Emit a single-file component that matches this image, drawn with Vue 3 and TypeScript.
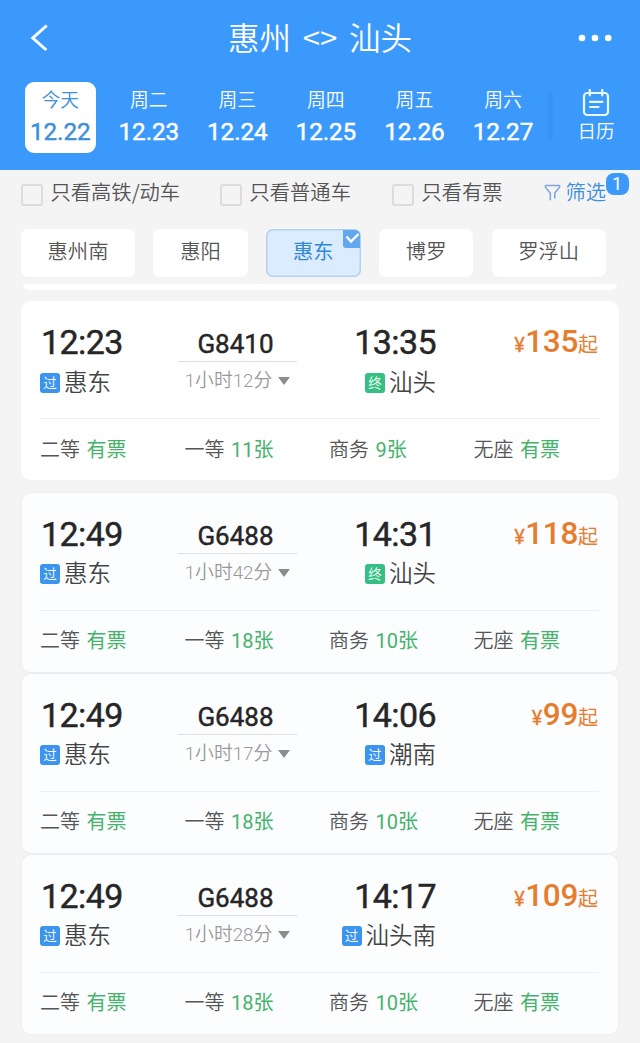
<script setup lang="ts">
interface Day { week: string; date: string }
interface Seat { name: string; left: string }
interface Stop { name: string; end?: boolean }
interface Train {
  depart: string
  arrive: string
  code: string
  duration: string
  from: Stop
  to: Stop
  price: number
  seats: Seat[]
}

const days: Day[] = [
  { week: '今天', date: '12.22' },
  { week: '周二', date: '12.23' },
  { week: '周三', date: '12.24' },
  { week: '周四', date: '12.25' },
  { week: '周五', date: '12.26' },
  { week: '周六', date: '12.27' },
]

const filters: string[] = ['只看高铁/动车', '只看普通车', '只看有票']
const stations: string[] = ['惠州南', '惠阳', '惠东', '博罗', '罗浮山']
const activeStation = '惠东'

const seats = (first: string, business: string): Seat[] => [
  { name: '二等', left: '有票' },
  { name: '一等', left: first },
  { name: '商务', left: business },
  { name: '无座', left: '有票' },
]

const trains: Train[] = [
  { depart: '12:23', arrive: '13:35', code: 'G8410', duration: '1小时12分', from: { name: '惠东' }, to: { name: '汕头', end: true }, price: 135, seats: seats('11张', '9张') },
  { depart: '12:49', arrive: '14:31', code: 'G6488', duration: '1小时42分', from: { name: '惠东' }, to: { name: '汕头', end: true }, price: 118, seats: seats('18张', '10张') },
  { depart: '12:49', arrive: '14:06', code: 'G6488', duration: '1小时17分', from: { name: '惠东' }, to: { name: '潮南' }, price: 99, seats: seats('18张', '10张') },
  { depart: '12:49', arrive: '14:17', code: 'G6488', duration: '1小时28分', from: { name: '惠东' }, to: { name: '汕头南' }, price: 109, seats: seats('18张', '10张') },
]
</script>

<template>
  <div class="page">
    <header class="header">
      <div class="titlebar">
        <svg class="back" width="20" height="28" viewBox="0 0 20 28"><path d="M17.8 1.5 3.8 14 17.3 26" /></svg>
        <h1 class="title"><span>惠州</span><span class="swap">&lt;&gt;</span><span>汕头</span></h1>
        <svg class="more" width="34" height="8" viewBox="0 0 34 8">
          <circle cx="4" cy="4" r="3.3" /><circle cx="17" cy="4" r="3.3" /><circle cx="30.2" cy="4" r="3.3" />
        </svg>
      </div>
      <div class="dates">
        <div v-for="(d, i) in days" :key="d.date" class="day" :class="{ today: i === 0 }">
          <span class="week">{{ d.week }}</span>
          <span class="date">{{ d.date }}</span>
        </div>
        <div class="calendar">
          <svg width="28" height="28" viewBox="0 0 28 28">
            <rect x="2" y="4" width="24" height="22" rx="3.2" />
            <path d="M7.8 1v5.5M20.2 1v5.5M8 12.8h12.5M8 18h8.5" />
          </svg>
          <span>日历</span>
        </div>
      </div>
    </header>

    <div class="filters">
      <label v-for="f in filters" :key="f" class="filter"><i class="box"></i><span>{{ f }}</span></label>
      <div class="sift">
        <svg width="17" height="18" viewBox="0 0 17 18"><path d="M6.3 16.3V9.2L1.5 3.2Q.8 1.5 2.3 1.5h12.4q1.5 0 .8 1.7L10.8 9v5.6" /></svg>
        <span>筛选</span>
        <b class="count">1</b>
      </div>
    </div>

    <div class="chips">
      <div v-for="s in stations" :key="s" class="chip" :class="{ active: s === activeStation, wide: s.length > 2 }">
        {{ s }}
        <svg v-if="s === activeStation" class="tick" width="17" height="18" viewBox="0 0 17 18">
          <path class="tick-bg" d="M0 0h12a5 5 0 0 1 5 5v13H3a3 3 0 0 1-3-3z" />
          <path class="tick-mark" d="M3.5 6.5 8 11.5 15.5 4" />
        </svg>
      </div>
    </div>

    <div class="sliver"></div>

    <main class="list">
      <article v-for="(t, i) in trains" :key="i" class="card">
        <div class="trip">
          <div class="end">
            <span class="time">{{ t.depart }}</span>
            <span class="stop"><i class="tag">过</i>{{ t.from.name }}</span>
          </div>
          <div class="middle">
            <span class="code">{{ t.code }}</span>
            <span class="duration">{{ t.duration }}<svg width="12" height="8" viewBox="0 0 12 8"><path d="M0 0h12L6 8z" /></svg></span>
          </div>
          <div class="end arrive">
            <span class="time">{{ t.arrive }}</span>
            <span class="stop"><i class="tag" :class="{ last: t.to.end }">{{ t.to.end ? '终' : '过' }}</i>{{ t.to.name }}</span>
          </div>
          <div class="price"><span class="yen">¥</span><span class="amount">{{ t.price }}</span><span class="from">起</span></div>
        </div>
        <div class="seats">
          <div v-for="s in t.seats" :key="s.name" class="seat"><span>{{ s.name }}</span><span class="left">{{ s.left }}</span></div>
        </div>
      </article>
    </main>
  </div>
</template>

<style>
body { background: #f4f4f5; }
</style>

<style scoped>
* { box-sizing: border-box; }
.page {
  width: 640px;
  height: 1043px;
  overflow: hidden;
  background: #f4f4f5;
  color: #555;
  font-family: "Noto Sans CJK SC", "Noto Sans", sans-serif;
  font-weight: 350;
  white-space: nowrap;
}
.date, .time, .code, .duration, .left, .yen, .amount, .count {
  font-family: Roboto, "Noto Sans CJK SC", sans-serif;
}
.date, .time, .code { font-weight: 400; -webkit-text-stroke: .45px currentColor; }
.header { height: 170px; background: #3b99fc; color: #fff; }
.titlebar { display: flex; justify-content: space-between; align-items: center; height: 76px; padding: 0 28px 0 29px; }
.back { fill: none; stroke: #fff; stroke-width: 3; }
.more { fill: #fff; }
.title { display: flex; margin: 0 0 0 13px; font-size: 31.5px; font-weight: 350; line-height: 39px; height: 42px; }
.swap { width: 58px; text-align: center; }
.dates { display: flex; padding: 6px 0 0 16px; }
.day { display: flex; flex-direction: column; align-items: center; width: 71px; height: 71px; margin: 0 8.85px; border-radius: 9px; }
.today { background: #fff; color: #3b8fdb; }
.week { font-size: 18.8px; line-height: 24px; margin-top: 5px; }
.date { font-size: 24.3px; line-height: 32px; margin-top: 5px; letter-spacing: -.1px; }
.calendar {
  display: flex; flex-direction: column; align-items: center; width: 93px; height: 71px;
  padding: 7px 0 0 5px; font-size: 18.5px; line-height: 26px;
  background: linear-gradient(90deg, rgba(35, 115, 220, 0), rgba(35, 115, 220, .2), rgba(35, 115, 220, 0));
  background-size: 7px 48px; background-repeat: no-repeat; background-position: 0 10px;
}
.calendar svg { fill: none; stroke: #e6fbff; stroke-width: 2.2; stroke-linecap: round; }
.filters { display: flex; height: 59px; padding: 8px 0 0 21px; font-size: 20.3px; line-height: 26px; }
.filter { display: flex; }
.filter:nth-child(1) { width: 199px; }
.filter:nth-child(2) { width: 172px; }
.filter:nth-child(3) { width: 151.5px; }
.box { width: 22px; height: 22px; margin: 6px 7.5px 0 0; border: 2px solid #dcdcdd; border-radius: 3px; }
.sift { display: flex; color: #3b8fe0; }
.sift svg { margin: 6px 5px 0 0; fill: none; stroke: #7ea6de; stroke-width: 1.6; }
.count { width: 23px; height: 22px; margin: -5px 0 0 -.5px; border-radius: 8px; background: #3b99fc; color: #fff; font-size: 18px; font-weight: 400; line-height: 22px; text-align: center; }
.chips { display: flex; gap: 18.3px; padding-left: 21px; height: 55px; }
.chip { position: relative; width: 94.5px; height: 48px; border-radius: 7px; background: #fff; text-align: center; font-size: 20.3px; line-height: 43px; }
.wide { width: 114px; }
.active { background: #dcecff; color: #2f88d8; font-weight: 400; box-shadow: inset 0 0 0 1.5px #b5d1ef; }
.tick { position: absolute; top: 1px; right: 1px; }
.tick-bg { fill: #62a8ee; }
.tick-mark { fill: none; stroke: #fff; stroke-width: 2.4; }
.sliver { width: 594px; height: 6px; margin: 0 0 11px 23px; background: #fff; border-radius: 0 0 6px 6px; }
.card { width: 596px; height: 179px; margin: 0 0 2px 22px; padding: 0 19px 0 18px; border-radius: 9px; background: #fcfdff; box-shadow: 0 0 3px rgba(0, 0, 0, .06); }
.card:first-child { width: 598px; height: 179px; margin: 0 0 13px 21px; padding: 0 20px 0 19px; background: #fff; box-shadow: none; }
.trip { display: grid; grid-template-columns: 138px 119px 139px 1fr; height: 117.5px; padding-top: 17px; border-bottom: 1.5px solid #efeff0; }
.end { display: flex; flex-direction: column; }
.arrive { align-items: flex-end; }
.time { height: 44px; padding: 2.5px 0 0 1px; font-size: 34px; line-height: 43px; letter-spacing: -.6px; color: #262626; }
.stop { display: flex; font-size: 23.5px; line-height: 37px; height: 37px; color: #444; }
.tag { width: 20px; height: 20px; margin: 10px 4px 0 0; border-radius: 3px; background: #3b94ee; color: #fff; font-size: 13.5px; font-style: normal; line-height: 18px; text-align: center; }
.card:first-child .stop { padding-top: 1px; }
.last { background: #35bf84; }
.middle { display: flex; flex-direction: column; align-items: center; }
.code { width: 119px; height: 43.5px; padding: 6.5px 4px 0 0; border-bottom: 1.5px solid #dededf; font-size: 26px; line-height: 38px; text-align: center; color: #262626; }
.duration { display: flex; align-items: center; font-size: 18.8px; line-height: 34px; padding-top: 2px; color: #999; }
.duration svg { fill: #8c8c8c; margin: 0 0 0 6px; }
.price { display: flex; justify-content: flex-end; align-items: baseline; height: 44px; line-height: 43px; padding: 2px 1px 0 0; color: #e67c2e; }
.yen { font-size: 20px; font-weight: 400; margin-right: .5px; -webkit-text-stroke: .3px currentColor; }
.amount { font-size: 31.5px; font-weight: 500; letter-spacing: -.3px; }
.from { font-size: 20px; font-weight: 400; }
.seats { display: grid; grid-template-columns: repeat(4, 144.5px); padding-top: 12px; font-size: 20px; line-height: 34px; }
.seat { display: flex; align-items: baseline; gap: 6.5px; }
.left { color: #45b36b; font-weight: 400; }
.card:first-child .seats { padding-top: 13px; }
</style>
